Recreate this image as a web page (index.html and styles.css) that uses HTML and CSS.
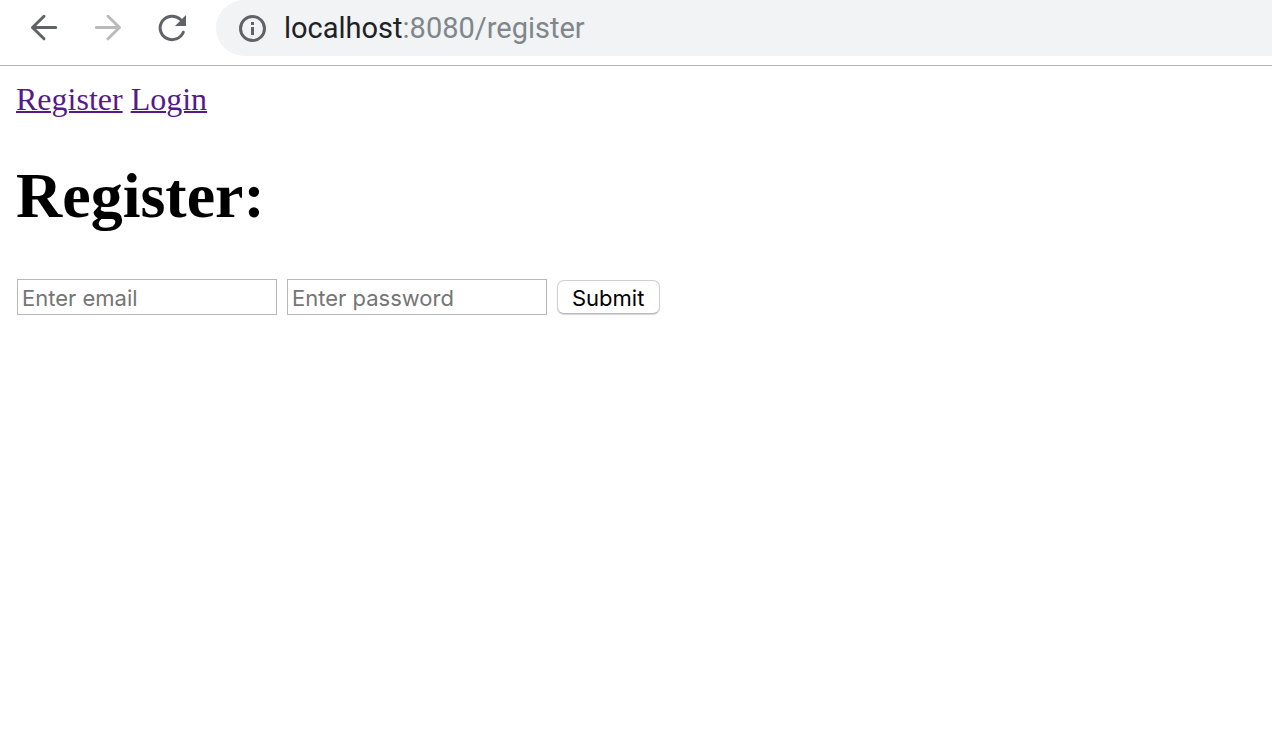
FILE: index.html
```html
<!DOCTYPE html>
<html lang="en">
<head>
<meta charset="utf-8">
<title>Register</title>
<link rel="stylesheet" href="styles.css">
</head>
<body>
<header class="toolbar">
  <button class="tool" type="button" aria-label="Back">
    <svg class="icon" viewBox="0 0 32 32"><path d="M27.700 15.500H4.500M16 4.300L4.500 15.500 16 26.800"/></svg>
  </button>
  <button class="tool" type="button" aria-label="Forward" disabled>
    <svg class="icon" viewBox="0 0 32 32"><path d="M4.300 15.500h23.200M16 4.300l11.500 11.200L16 26.800"/></svg>
  </button>
  <button class="tool" type="button" aria-label="Reload">
    <svg class="icon" viewBox="0 0 32 32"><path d="M27.300 20.200A12 11.700 0 1 1 24.500 7.500"/><path class="solid" d="M30 3v11H19z"/></svg>
  </button>
  <div class="address">
    <svg class="info" viewBox="0 0 28 28"><circle cx="14.500" cy="14.500" r="12"/><path d="M14.500 13v8M14.500 8v3"/></svg>
    <span class="url"><span class="host">localhost</span>:8080/register</span>
  </div>
</header>
<main class="page">
  <nav class="links"><a href="#register">Register</a> <a href="#login">Login</a></nav>
  <h1 class="title">Register:</h1>
  <form class="form">
    <input class="field" type="email" placeholder="Enter email" aria-label="Email">
    <input class="field" type="password" placeholder="Enter password" aria-label="Password">
    <button class="submit" type="submit">Submit</button>
  </form>
</main>
</body>
</html>
```
FILE: styles.css
```css
* { box-sizing: border-box; }
body { margin: 0; background: #fff; color: #000; font-family: "Liberation Serif", "Times New Roman", serif; }
.toolbar { display: flex; align-items: flex-start; height: 66px; padding-left: 12px; border-bottom: 1px solid #b6b4b6; }
.tool { display: flex; align-items: center; justify-content: center; width: 64px; height: 56px; padding: 0; border: 0; background: none; color: #5f6368; }
.tool:disabled { color: #bababc; }
.icon { width: 32px; height: 32px; fill: none; stroke: currentColor; stroke-width: 3; stroke-linecap: round; stroke-linejoin: round; }
.icon .solid { fill: currentColor; stroke: none; }
.address { display: flex; flex: 1; align-items: center; gap: 18px; height: 56px; margin-left: 12px; padding-left: 22px; border-radius: 28px 0 0 28px; background: #f1f3f4; }
.info { width: 28px; height: 28px; overflow: visible; fill: none; stroke: #5f6368; stroke-width: 3; }
.url { color: #80868b; font: 29px/36px Roboto, sans-serif; }
.host { color: #202124; }
.page { padding: 15px 16px; }
.links { font-size: 32px; line-height: 36px; }
.links a { color: #551a8b; text-decoration-thickness: 2px; }
.title { margin: 41px 0 44px; font-size: 64px; line-height: 76px; }
.form { display: flex; align-items: center; gap: 10px; padding: 1px; }
.field { width: 260px; height: 36px; padding: 4px 4px 2px; border: 1px solid #b8b8b8; background: #fff; font: 22px/28px Inter, sans-serif; }
.field::placeholder { color: #757575; }
.submit { height: 34px; padding: 2px 15px 0 14px; border: 1px solid #d0d0d0; border-bottom-color: #b8b8b8; border-radius: 7px; background: #fff; box-shadow: 0 1px 1px #d8d8d8; color: #000; font: 22px/28px Inter, sans-serif; }
```
